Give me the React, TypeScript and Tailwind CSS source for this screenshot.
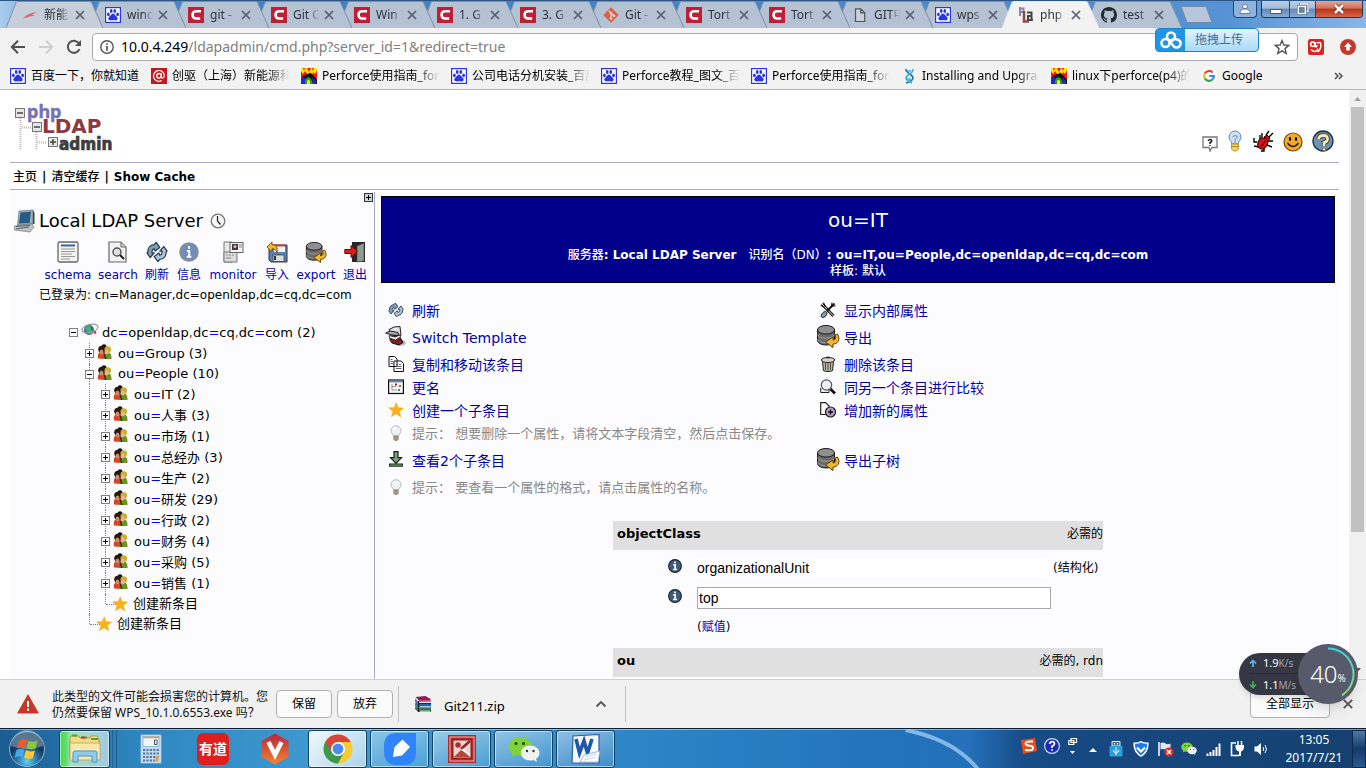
import React from "react";

const UI_FONT = "font-['Noto_Sans','Noto_Sans_CJK_SC',sans-serif]";
const PAGE_FONT = "font-['DejaVu_Sans','Noto_Sans_CJK_SC',sans-serif]";

type IconProps = { className?: string };

/* ---------- favicons ---------- */

const Paw = ({ className = "size-4" }: IconProps) => (
  <svg viewBox="0 0 16 16" className={className}>
    <rect x=".6" y=".6" width="14.8" height="14.8" fill="#fff" stroke="#2b35e0" strokeWidth="1.2" />
    <g fill="#2b35e0">
      <ellipse cx="3.4" cy="7.4" rx="1.4" ry="1.8" />
      <ellipse cx="6.2" cy="4" rx="1.4" ry="1.9" />
      <ellipse cx="9.8" cy="4" rx="1.4" ry="1.9" />
      <ellipse cx="12.6" cy="7.4" rx="1.4" ry="1.8" />
      <path d="M8 6.600c1.600 0 2 1.500 3.200 2.600 1.300 1.200 2 2.100 1.200 3.400-.8 1.200-2.600.7-4.400.7s-3.600.5-4.400-.7c-.8-1.300-.1-2.200 1.200-3.400C6 8.100 6.400 6.600 8 6.600z" />
    </g>
  </svg>
);

const CIcon = ({ className = "size-4" }: IconProps) => (
  <svg viewBox="0 0 16 16" className={className}>
    <rect width="16" height="16" fill="#bd1f36" />
    <path d="M13 4.300H8.500C5.800 4.300 4.600 6 4.600 8c0 2.300 1.300 3.500 3.600 3.500h4" fill="none" stroke="#fff" strokeWidth="2.600" />
  </svg>
);

const Hawk = ({ className = "size-4" }: IconProps) => (
  <svg viewBox="0 0 16 16" className={className}>
    <path d="M1 12c2-3 5-5.500 14-7-2 1-4 2-5 3l3-.3c-2 1-3 1.500-6 1.700L5 11l-.5-1z" fill="#e2606b" />
  </svg>
);

const GitIcon = ({ className = "size-4" }: IconProps) => (
  <svg viewBox="0 0 16 16" className={className}>
    <path d="M8 .3 15.700 8 8 15.700.3 8z" fill="#e0603f" />
    <path d="m5.500 3.500 2.500 2.500v6M8 6l3 3" stroke="#d5dae4" strokeWidth="1.200" fill="none" />
    <g fill="#d5dae4"><circle cx="8" cy="6" r="1.300" /><circle cx="8" cy="11.500" r="1.300" /><circle cx="11" cy="8.800" r="1.300" /></g>
  </svg>
);

const FileIcon = ({ className = "size-4" }: IconProps) => (
  <svg viewBox="0 0 16 16" className={className}>
    <path d="M3.500 1.800h5.200l4 4v8.700H3.500zM8.700 1.800v4h4" fill="#c7d0dc" stroke="#555" strokeWidth="1.200" />
  </svg>
);

const PlaIcon = ({ className = "size-4" }: IconProps) => (
  <svg viewBox="0 0 16 16" className={className}>
    <path d="M2 0v9M2 1.500h3.500v3.500H2" fill="none" stroke="#8a86a8" strokeWidth="2" />
    <path d="M6 4v10.500h5" fill="none" stroke="#8b4a50" strokeWidth="2.500" />
    <path d="M9 5.500h4.500V13H10V9h3.500m0 3.800H15" fill="none" stroke="#444" strokeWidth="2" />
  </svg>
);

const Github = ({ className = "size-4" }: IconProps) => (
  <svg viewBox="0 0 16 16" className={className}>
    <path fill="#24292e" d="M8 0C3.580 0 0 3.580 0 8c0 3.540 2.290 6.530 5.470 7.590.4.070.55-.17.55-.38 0-.19-.01-.82-.01-1.490-2.010.37-2.530-.49-2.690-.94-.09-.23-.48-.94-.82-1.130-.28-.15-.68-.52-.01-.53.63-.01 1.080.58 1.230.82.72 1.210 1.870.87 2.330.66.070-.52.28-.87.51-1.070-1.780-.2-3.640-.89-3.640-3.950 0-.87.31-1.590.82-2.150-.08-.2-.36-1.020.08-2.120 0 0 .67-.21 2.200.82a7.640 7.640 0 0 1 4 0c1.530-1.040 2.200-.82 2.200-.82.44 1.100.16 1.920.08 2.120.51.56.82 1.270.82 2.150 0 3.070-1.870 3.750-3.650 3.950.29.25.54.73.54 1.480 0 1.070-.01 1.930-.01 2.200 0 .21.15.46.55.38A8.010 8.010 0 0 0 16 8c0-4.420-3.580-8-8-8z" />
  </svg>
);

const AtIcon = ({ className = "size-4" }: IconProps) => (
  <svg viewBox="0 0 16 16" className={className}>
    <rect width="16" height="16" fill="#c8181e" />
    <circle cx="8" cy="7.800" r="2.300" fill="none" stroke="#fff" strokeWidth="1.300" />
    <path d="M10.400 5.300v3.700c0 1.600 2.900 1.500 2.900-1.400A5.400 5.400 0 1 0 10.800 12.500" fill="none" stroke="#fff" strokeWidth="1.200" />
  </svg>
);

const HouseIcon = ({ className = "size-4" }: IconProps) => (
  <svg viewBox="0 0 16 16" className={className}>
    <rect width="16" height="16" fill="#f01818" />
    <path d="M0 0h2l1 3 1-3h2l2 4 2-4h1l1 3 1-3h3v2l-2 4-2-2-1 3-2-3-2 3-3-4-2 3-2-3z" fill="#ffe900" />
    <path d="M1 9 6 6l4-1 6 7v4h-5z" fill="#111" />
    <path d="M0 9.500h4V16H0z" fill="#1b2ad0" />
    <path d="M4 15c-.5-5 4.500-9 7-2l1 3H9z" fill="#2a9d2a" />
    <path d="m11 9 4 4v3h-3z" fill="#1b2ad0" />
    <path d="M6 16v-3q1.500-2 3 0v3z" fill="#ffe900" />
  </svg>
);

const HelixIcon = ({ className = "size-4" }: IconProps) => (
  <svg viewBox="0 0 16 16" className={className} fill="none" strokeWidth="1.600">
    <path d="M5 1c-1 4 7 5 7 9 0 3-4 4-7 5" stroke="#1f6e9e" />
    <path d="M12 1c1 5-7 5-7 9 0 3 3 3 6 5" stroke="#35b0d6" />
    <path d="M6 3h4M6 11h4" stroke="#35b0d6" />
  </svg>
);

const GoogleIcon = ({ className = "size-4" }: IconProps) => (
  <svg viewBox="0 0 16 16" className={className}>
    <circle cx="8" cy="8" r="8" fill="#fff" />
    <g fill="none" strokeWidth="2.200">
      <path d="M11.700 4.500A5 5 0 0 0 3.700 5.600" stroke="#ea4335" />
      <path d="M3.700 5.600a5 5 0 0 0 0 4.800" stroke="#fbbc05" />
      <path d="M3.700 10.400a5 5 0 0 0 7.600 1.300" stroke="#34a853" />
      <path d="M11.300 11.700A5 5 0 0 0 13 8H8.200" stroke="#4285f4" />
    </g>
  </svg>
);

/* ---------- page icons ---------- */

const Refresh = ({ className = "size-4" }: IconProps) => (
  <svg viewBox="0 0 24 24" className={className} strokeLinejoin="round">
    <path d="M2 12c0-5 3-8 7-8l2-2.500L15 7l-5 4-1-2.500C7 8.500 6.500 10 6.500 13L9 13l-4.500 5L1 13z" fill="#7f9dbd" stroke="#27384a" strokeWidth="1.300" />
    <path d="M22 12c0 5-3 8-7 8l-2 2.500L9 17l5-4 1 2.500c2 0 2.500-1.500 2.500-4.500H15l4.500-5L23 11z" fill="#a9c1d9" stroke="#27384a" strokeWidth="1.300" />
  </svg>
);

const Database = ({ className = "size-6" }: IconProps) => (
  <svg viewBox="0 0 24 24" className={className}>
    <path d="M1.500 5.500v11c0 2.500 4 4.500 8.500 4.500s8.500-2 8.500-4.500v-11z" fill="#6b6b6b" stroke="#1a1a1a" />
    <ellipse cx="10" cy="5.800" rx="8.500" ry="4.300" fill="#8f8f8f" stroke="#1a1a1a" />
    <path d="M1.500 10.500c1 5 16 5 17 0M1.500 15c1 5 16 5 17 0" fill="none" stroke="#aaa" strokeWidth=".8" />
    <path d="M21.500 10c3.500 6 0 10-4.500 10v3.500L9.500 18l7.500-5v3c2.500 0 3.500-2 2-5z" fill="#f2b630" stroke="#5d3c00" />
  </svg>
);

const InfoIcon = ({ className = "size-4" }: IconProps) => (
  <svg viewBox="0 0 16 16" className={className}>
    <circle cx="8" cy="8" r="7.300" fill="#425b7b" stroke="#15202e" strokeWidth="1.200" />
    <path d="M8 2.800v2M6 6.800h2.200v5M5.800 12h4.600" stroke="#fff" strokeWidth="1.900" fill="none" />
  </svg>
);

const InfoSoft = ({ className = "size-5" }: IconProps) => (
  <svg viewBox="0 0 20 20" className={className}>
    <circle cx="10" cy="10" r="9" fill="#6f8fb8" stroke="#8d8d8d" strokeWidth="1.500" />
    <path d="M10 4.300v2.400M8 9h2.200v5.300M7.800 14.700h4.600" stroke="#fff" strokeWidth="2" fill="none" />
  </svg>
);

const People = ({ className = "size-4" }: IconProps) => (
  <svg viewBox="0 0 16 16" className={className}>
    <path d="M1 14.500c-1-4 1-6.500 3-6.500h4v7z" fill="#dc431f" />
    <path d="M7 15c0-5 1.500-6.500 4-6.500 3 0 3.500 3 3.500 6.500z" fill="#6d931e" />
    <circle cx="7" cy="2.800" r="2.500" fill="#16130f" />
    <circle cx="4.800" cy="5.300" r="3.600" fill="#2d1810" />
    <ellipse cx="4.500" cy="8" rx="2" ry="2.600" fill="#c98f6c" />
    <circle cx="10.800" cy="5.500" r="3.300" fill="#c9b02c" />
    <ellipse cx="9.800" cy="7.800" rx="1.900" ry="2.600" fill="#e0ba8e" />
    <path d="M6.500 9.500 8 15h1.500L8 10z" fill="#2b2b14" />
  </svg>
);

const Star = ({ className = "size-4" }: IconProps) => (
  <svg viewBox="0 0 16 16" className={className}>
    <path d="m8.200.8 1.900 4.900 5.400.4-4.200 3.300 1.500 5.400-4.700-3-4.700 2.800 1.700-5L.8 5.800l5.400-.1z" fill="#ffb215" stroke="#e89b10" strokeWidth=".5" />
  </svg>
);

const Bulb = ({ className = "size-4" }: IconProps) => (
  <svg viewBox="0 0 16 16" className={className}>
    <path d="M8 .7a5 5 0 0 1 5 5c0 2-1.700 3-2.200 5H5.200C4.700 8.700 3 7.700 3 5.700a5 5 0 0 1 5-5z" fill="#eef1f3" stroke="#b1b6ba" strokeWidth=".9" />
    <path d="M5.700 11h4.600v3.200l-1 1.300H6.700l-1-1.300z" fill="#a8987c" stroke="#858077" strokeWidth=".6" />
    <path d="M6 3.500h2.500" stroke="#fff" strokeWidth="1.500" />
  </svg>
);

const Copy = () => (
  <svg viewBox="0 0 16 16" className="size-4" fill="#fff" stroke="#111">
    <path d="M1 .5h5.500L9 3v7.500H1zM6 5h7l2.500 2.500v8H6z" />
    <path d="M2.500 3.500h2M2.500 5.500h3M2.500 7.500h3M8 8.500h2m1 0h2M8 10.500h5.500M8 12.500h5.500" stroke="#555" strokeWidth=".9" />
  </svg>
);
const Rename = () => (
  <svg viewBox="0 0 16 16" className="size-4">
    <rect x=".6" y="1" width="14.800" height="13.500" fill="#f4f4f4" stroke="#111" strokeWidth="1.200" />
    <path d="M1 2.600h14" stroke="#5b86ad" strokeWidth="1.500" />
    <path d="M4 5v6h5M4 7.500h4" stroke="#999" fill="none" />
    <path d="M7 4.500h2v2H7z" fill="#b32020" /><path d="M10 10h2v2h-2z" fill="#3a9a3a" /><path d="M11 6h2v2h-2z" fill="#777" />
  </svg>
);
const Template = () => (
  <svg viewBox="0 0 22 20" className="h-5 w-[22px]">
    <path d="m9 15 6-2 5 2 1 3-4 2-6-1z" fill="#777" opacity=".5" />
    <path d="m4 3.500 5-2.500 6-.5 1 9-7-1-4-2z" fill="#d9d9d9" stroke="#222" />
    <path d="M.7 7 5 5l8 1.500 1 3-7-.5z" fill="#aaa" stroke="#222" />
    <path d="m5 10 9-.5 4 7-4 2.500-7-2-2-3z" fill="#7d1f2b" stroke="#1a1012" />
    <path d="m4 9.500 6 1.500 5-2 .5 2-5 3-6-2z" fill="#f2f2f2" stroke="#222" strokeWidth=".8" />
    <path d="m9 2.500 4 1" stroke="#fff" strokeWidth="1.500" />
  </svg>
);
const DownArrow = () => (
  <svg viewBox="0 0 16 16" className="size-4">
    <path d="M6 .7h4v6h3.500L8 12.300 2.500 6.700H6z" fill="#7ba27c" stroke="#142414" strokeWidth="1.200" />
    <rect x="1.600" y="13" width="12.800" height="2.200" fill="#7ba27c" stroke="#142414" strokeWidth="1" />
  </svg>
);
const Tools = () => (
  <svg viewBox="0 0 16 16" className="size-4">
    <path d="m2 2 11.500 12" stroke="#111" strokeWidth="3" /><path d="m2 2 11.500 12" stroke="#eee" strokeWidth="1" />
    <path d="M14.500 1.500 7 9" stroke="#111" strokeWidth="2" />
    <path d="M1 14.500c0-2 2-5 4.500-5l1.500 1c0 3-2 5-5 5z" fill="#7d9fc4" stroke="#222" />
    <path d="M3.500.5 5 3.500 3.500 5 .7 3.500M12 .5l-.5 3.500 4 0" fill="none" stroke="#111" />
  </svg>
);
const Trash = () => (
  <svg viewBox="0 0 16 16" className="size-4">
    <path d="M2.500 5h11l-.9 9.500C11 16 5 16 3.400 14.500z" fill="#b9b6a7" stroke="#222" />
    <path d="M5.500 7v7M8 7v7.500M10.500 7v7" stroke="#4f4d44" />
    <ellipse cx="8" cy="4" rx="6.700" ry="2.500" fill="#d8d6cb" stroke="#222" /><path d="M6 1.500h4" stroke="#222" strokeWidth="1.500" />
  </svg>
);
const Compare = () => (
  <svg viewBox="0 0 16 16" className="size-4">
    <path d="M.7 9v4.500H9V9" fill="#eee" stroke="#222" />
    <circle cx="6.500" cy="6" r="5.200" fill="#eef1f3" stroke="#555" strokeWidth="1.200" />
    <path d="m10.500 10 4.500 4.500" stroke="#111" strokeWidth="2.600" />
  </svg>
);
const AddAttr = () => (
  <svg viewBox="0 0 16 16" className="size-4">
    <path d="M.7.7h5L9 4v8.500H.7z" fill="#fff" stroke="#222" strokeWidth="1.200" />
    <circle cx="10.500" cy="10" r="5" fill="#b3a3cc" stroke="#1d1828" strokeWidth="1.200" />
    <path d="M10.500 7.500v5M8 10h5" stroke="#111" strokeWidth="1.400" />
  </svg>
);

const SchemaIcon = () => (
  <svg viewBox="0 0 22 22" className="size-[22px]">
    <rect x="1" y="1" width="20" height="20" rx="1.500" fill="#f3f3f0" stroke="#696969" strokeWidth="1.300" />
    <path d="M4 4.500h14" stroke="#3f659a" strokeWidth="2" />
    <path d="M4 8h14M4 10.500h14M4 13h11M4 15.500h14M4 18h9" stroke="#999" strokeWidth="1.200" />
  </svg>
);
const SearchIcon = () => (
  <svg viewBox="0 0 22 22" className="size-[22px]">
    <path d="M2 1h12l5 5v15H2z" fill="#f3f3f0" stroke="#666" strokeWidth="1.200" /><path d="M14 1v5h5" fill="#ccc" stroke="#666" />
    <circle cx="10" cy="11" r="4" fill="#dde3e5" stroke="#555" strokeWidth="1.500" /><path d="m13 14 4 4" stroke="#222" strokeWidth="2.200" />
  </svg>
);
const MonitorIcon = () => (
  <svg viewBox="0 0 22 22" className="size-[22px]">
    <path d="M2 1h8v20H2z" fill="#e8e8e4" stroke="#777" /><path d="M2 11h13v10H2z" fill="#dcdcd8" stroke="#777" />
    <rect x="8" y="1.500" width="13" height="10" fill="#f2f2ee" stroke="#666" /><rect x="10" y="3" width="6" height="6" fill="#3b3b4a" /><circle cx="13" cy="5.500" r="1.500" fill="#e6bd92" />
    <path d="M4 14h2m1 0h2m1 0h2M4 17h5M17 4h3M17 6h3" stroke="#888" />
  </svg>
);
const ImportIcon = () => (
  <svg viewBox="0 0 22 22" className="size-[22px]">
    <path d="M3 4h18v17H5l-2-2z" fill="#5b83b5" stroke="#24364d" /><rect x="8" y="4" width="11" height="7" fill="#f6f6f6" /><path d="M8 4.500h11" stroke="#cf3b33" strokeWidth="2" />
    <rect x="7" y="14" width="11" height="6.500" fill="#ddd" stroke="#333" strokeWidth=".7" /><path d="M9 15v4" stroke="#333" strokeWidth="2" />
    <path d="M1 6 6 .8v3c4 0 6 2 5 8-1-3-2-4-5-4V11z" fill="#f4b62a" stroke="#6a4300" strokeWidth=".8" />
  </svg>
);
const LogoutIcon = () => (
  <svg viewBox="0 0 22 22" className="size-[22px]">
    <path d="M8 1h13v20H8z" fill="#262626" /><path d="m20 2-7 3v16l7-1z" fill="#8e9c8f" stroke="#444" strokeWidth=".6" />
    <path d="M.8 8.500H7v-4l6.500 6-6.500 6v-4H.8z" fill="#d62020" stroke="#650808" />
  </svg>
);
const ComputerIcon = () => (
  <svg viewBox="0 0 22 24" className="h-6 w-[22px]">
    <path d="m5 2 14-1v14L3.500 16z" fill="#9aaeb5" stroke="#667" strokeWidth=".6" /><path d="m6.500 3.500 10.500-.7L15.500 14 5 14.500z" fill="#235a87" />
    <path d="M19 1l1.500 3v11L19 15z" fill="#3a4548" /><path d="m0 17 18-2 2 3-4 5-16-2z" fill="#bcc7c4" stroke="#5d6a69" strokeWidth=".6" /><path d="m2 20 13-2M2 17.500l14-1" stroke="#55605e" />
  </svg>
);
const ClockIcon = () => (
  <svg viewBox="0 0 16 16" className="size-4">
    <circle cx="8" cy="8" r="6.800" fill="#f7f7f4" stroke="#777" strokeWidth="1.300" /><path d="M7.500 3v5l3 3.500" fill="none" stroke="#222" strokeWidth="1.200" />
  </svg>
);
const GlobeIcon = () => (
  <svg viewBox="0 0 18 16" className="h-4 w-[18px]">
    <circle cx="8" cy="7" r="5" fill="#2b62a8" /><path d="M4 5c2-3 6-3 6 0s3 2 2 5-4 1-5 0-3-2-3-5z" fill="#3bb36c" />
    <ellipse cx="9" cy="5.500" rx="8.200" ry="4" fill="none" stroke="#9a9a9a" strokeWidth="1.200" transform="rotate(-14 9 5.500)" /><circle cx="14" cy="9.500" r="1.300" fill="#c22" />
  </svg>
);

const PlaLogo = () => (
  <svg viewBox="0 0 104 50" className="h-[50px] w-[104px]" role="img" aria-label="phpLDAPadmin">
    <g fill="none" stroke="#bbb" strokeDasharray="1 1"><path d="M5.500 16v32M7 25.500h10M21.500 30v18M22 40.500h10" strokeWidth="2" /></g>
    <g fill="#e6e6e6" stroke="#777"><rect x=".5" y="6.500" width="9" height="9" /><rect x="17.500" y="20.500" width="9" height="9" /><rect x="33.500" y="35.500" width="9" height="9" /></g>
    <path d="M2 11h6M19 25h6M35 40h6M38 37v6" stroke="#444" strokeWidth="1.500" />
    <g fontWeight="bold">
      <text x="12" y="16" fontSize="18" fill="#7673b3" stroke="#7673b3" strokeWidth=".4" fontFamily="'Noto Sans'">php</text>
      <text x="27" y="31" fontSize="20" fill="#8b3a41" fontFamily="'DejaVu Sans'">LDAP</text>
      <text x="44" y="48" fontSize="17" fill="#3d3d3d" stroke="#3d3d3d" strokeWidth=".7" fontFamily="'DejaVu Sans Condensed'">admin</text>
    </g>
  </svg>
);

/* ---------- browser chrome ---------- */

type Icon = (p: IconProps) => React.JSX.Element;

const tabs: { icon: Icon; title: string; active?: boolean }[] = [
  { icon: Hawk, title: "新能" },
  { icon: Paw, title: "wind" },
  { icon: CIcon, title: "git -" },
  { icon: CIcon, title: "Git C" },
  { icon: CIcon, title: "Win" },
  { icon: CIcon, title: "1. G" },
  { icon: CIcon, title: "3. G" },
  { icon: GitIcon, title: "Git -" },
  { icon: CIcon, title: "Tort" },
  { icon: CIcon, title: "Tort" },
  { icon: FileIcon, title: "GIT中" },
  { icon: Paw, title: "wps" },
  { icon: PlaIcon, title: "php", active: true },
  { icon: Github, title: "test" },
];

function TabStrip() {
  return (
    <div className="flex h-7 items-start justify-between border-t border-[#2b5685] bg-[linear-gradient(90deg,#a9cdec_0%,#4288cf_6%,#3d7fc9_30%,#3f86d2_60%,#5793d4_90%,#8ab6e6_100%)]">
      <div className="flex pl-[6px]" role="tablist">
        {tabs.map((t, i) => (
          <div
            key={i}
            className="relative -mr-[14px] flex h-[27px] w-[97px] shrink-0 items-center pr-[18px] pl-4"
            style={{ zIndex: t.active ? 20 : 19 - i }}
          >
            <svg viewBox="0 0 97 27" className="absolute inset-0 h-full w-full" preserveAspectRatio="none">
              <path d="M0 27 10 1.500Q10.500.5 12 .5H83.500Q85 .5 85.500 1.500L97 27" fill={t.active ? "#f2f2f2" : i === 0 ? "#c6ced9" : "#b4c2d3"} stroke={t.active ? "#e4e8ec" : "#7f90a5"} strokeWidth="1" />
            </svg>
            <button role="tab" aria-selected={!!t.active} className="relative flex min-w-0 flex-1 items-center gap-1.5 text-left text-xs leading-5 text-[#2c333c]">
              <t.icon className="size-4 shrink-0" />
              <span className="w-[26px] overflow-hidden whitespace-nowrap [mask-image:linear-gradient(90deg,#000_60%,transparent)]">{t.title}</span>
            </button>
            <button aria-label="关闭标签页" className="relative">
              <svg viewBox="0 0 10 10" className="size-[10px]"><path d="m1 1 8 8M9 1 1 9" stroke="#56606c" strokeWidth="1.700" /></svg>
            </button>
          </div>
        ))}
        <button aria-label="新标签页" className="ml-[11px] h-[17px] self-center">
          <svg viewBox="0 0 34 17" className="h-[17px] w-[34px]"><path d="M3 .5h23q1 0 1.500 1l5 14q.3 1-1 1H9q-1 0-1.500-1l-5-14q-.3-1 .5-1z" fill="#b7c6da" stroke="#7289a6" /></svg>
        </button>
      </div>
      <div className="flex items-start gap-1 pr-[3px]">
        <button aria-label="用户" className="flex h-[17px] w-6 items-center justify-center rounded-b border border-t-0 border-[#26466e] bg-[#8fb3dc]">
          <svg viewBox="0 0 12 12" className="size-3"><circle cx="6" cy="3.500" r="2.300" fill="#fff" stroke="#3c5878" strokeWidth=".7" /><path d="M1 10.500c0-3 1.500-4.500 5-4.500s5 1.500 5 4.500z" fill="#fff" stroke="#3c5878" strokeWidth=".7" /></svg>
        </button>
        <div className="flex h-[17px] overflow-hidden rounded-b border border-t-0 border-[#26344c]">
          <button aria-label="最小化" className="flex w-7 items-center justify-center border-r border-[#2e4869] bg-[linear-gradient(#b9cfe8_0%,#a3bddb_45%,#6287b5_50%,#88acd8_100%)]">
            <svg viewBox="0 0 12 5" className="mt-1 h-[5px] w-3"><rect x=".5" y=".5" width="11" height="4" fill="#fff" stroke="#4b5c73" /></svg>
          </button>
          <button aria-label="还原" className="flex w-[26px] items-center justify-center border-r border-[#2e4869] bg-[linear-gradient(#b9cfe8_0%,#a3bddb_45%,#6287b5_50%,#88acd8_100%)]">
            <svg viewBox="0 0 12 12" className="size-3"><path d="M3.500 1h7.500v7.500H3.500z" fill="none" stroke="#445468" strokeWidth="2.200" /><path d="M3.500 1h7.500v7.500H3.500z" fill="none" stroke="#fff" strokeWidth="1.300" /><rect x="1.300" y="3.500" width="7" height="7" fill="#6287b5" stroke="#445468" strokeWidth="2.400" /><rect x="1.300" y="3.500" width="7" height="7" fill="none" stroke="#fff" strokeWidth="1.500" /></svg>
          </button>
          <button aria-label="关闭" className="flex w-[46px] items-center justify-center bg-[linear-gradient(#e3a595_0%,#d0705c_45%,#b93217_50%,#d5654a_100%)]">
            <svg viewBox="0 0 12 12" className="size-3"><path d="m2 2 8 8m0-8-8 8" stroke="#5b2a22" strokeWidth="4" /><path d="m2 2 8 8m0-8-8 8" stroke="#fff" strokeWidth="2.500" /></svg>
          </button>
        </div>
      </div>
    </div>
  );
}

function Toolbar() {
  return (
    <div className="flex h-[38px] items-center bg-[#f2f2f2] pr-2 pl-[10px]">
      <button aria-label="后退"><svg viewBox="0 0 16 16" className="size-4"><path d="M15 8H2m6-6.300L1.800 8 8 14.300" fill="none" stroke="#505050" strokeWidth="2" /></svg></button>
      <button aria-label="前进" className="ml-3"><svg viewBox="0 0 16 16" className="size-4"><path d="M1 8h13M8 1.700 14.200 8 8 14.300" fill="none" stroke="#cfcfcf" strokeWidth="2" /></svg></button>
      <button aria-label="重新加载" className="ml-3"><svg viewBox="0 0 16 16" className="size-4"><path d="M13.500 10A6 6 0 1 1 12.500 4" fill="none" stroke="#505050" strokeWidth="2" /><path d="M15 1v6H9z" fill="#505050" /></svg></button>
      <div className="ml-[10px] flex h-7 flex-1 items-center rounded-sm border border-[#a9a9a9] bg-white px-[7px]">
        <svg viewBox="0 0 14 14" className="size-[14px]"><circle cx="7" cy="7" r="6.200" fill="none" stroke="#555" strokeWidth="1.400" /><path d="M7 3.200v1.600M7 6v4.800" stroke="#555" strokeWidth="1.700" /></svg>
        <a href="#address" aria-label="地址" className="ml-[7px] flex-1 text-sm leading-5 text-[#808080]"><span className="text-black">10.0.4.249</span>/ldapadmin/cmd.php?server_id=1&amp;redirect=true</a>
        <button aria-label="收藏"><svg viewBox="0 0 16 16" className="size-4"><path d="m8 1.500 1.900 4.500 4.800.4-3.700 3.200 1.200 4.800L8 11.800l-4.200 2.600L5 9.600 1.300 6.400 6.100 6z" fill="none" stroke="#555" strokeWidth="1.400" /></svg></button>
      </div>
      <button aria-label="扩展" className="ml-[10px]">
        <svg viewBox="0 0 16 16" className="size-4"><rect width="16" height="16" rx="2.500" fill="#e02020" /><circle cx="4.800" cy="5.300" r="2.200" fill="none" stroke="#fff" strokeWidth="1.600" /><path d="M7 3v4.500q2 1 2-1.500M3 10.500c3 3 6 2.500 7-1M8.500 4q3-1 4 0 1.500 6-3 9" fill="none" stroke="#fff" strokeWidth="1.500" /></svg>
      </button>
      <button aria-label="更新" className="ml-4 mr-[2px]">
        <svg viewBox="0 0 16 16" className="size-4"><circle cx="8" cy="8" r="8" fill="#c53727" /><path d="M8 3.500 12 8h-2.300v3.500H6.300V8H4z" fill="#fff" /></svg>
      </button>
    </div>
  );
}

const bookmarks: { icon: Icon; title: string }[] = [
  { icon: Paw, title: "百度一下，你就知道" },
  { icon: AtIcon, title: "创驱（上海）新能源科" },
  { icon: HouseIcon, title: "Perforce使用指南_for" },
  { icon: Paw, title: "公司电话分机安装_百度" },
  { icon: Paw, title: "Perforce教程_图文_百" },
  { icon: Paw, title: "Perforce使用指南_for" },
  { icon: HelixIcon, title: "Installing and Upgra" },
  { icon: HouseIcon, title: "linux下perforce(p4)的" },
  { icon: GoogleIcon, title: "Google" },
];

function Bookmarks() {
  return (
    <div className="flex h-6 items-center border-b border-[#b6b4b6] bg-[#f2f2f2] pb-[3px] pl-[10px]">
      {bookmarks.map((b, i) => (
        <a key={i} href="#bookmark" className={`flex shrink-0 items-center gap-[5px] text-xs leading-4 text-black ${i === 0 ? "w-[141px]" : i < 8 ? "w-[150px]" : ""}`}>
          <b.icon className="size-4 shrink-0" />
          <span className={`overflow-hidden whitespace-nowrap ${i > 0 && i < 8 ? "w-[118px] [mask-image:linear-gradient(90deg,#000_80%,transparent)]" : ""}`}>{b.title}</span>
        </a>
      ))}
      <button aria-label="更多书签" className="mr-[22px] ml-auto"><svg viewBox="0 0 10 8" className="h-2 w-[10px]"><path d="m1 1 3 3-3 3m4-6 3 3-3 3" fill="none" stroke="#505050" strokeWidth="1.500" /></svg></button>
    </div>
  );
}

/* ---------- page: sidebar ---------- */

const serverTools: { label: string; width: string; icon: React.JSX.Element }[] = [
  { label: "schema", width: "w-[46px]", icon: <SchemaIcon /> },
  { label: "search", width: "w-[38px]", icon: <SearchIcon /> },
  { label: "刷新", width: "w-6", icon: <Refresh className="size-[22px]" /> },
  { label: "信息", width: "w-6", icon: <InfoSoft className="size-5" /> },
  { label: "monitor", width: "w-12", icon: <MonitorIcon /> },
  { label: "导入", width: "w-6", icon: <ImportIcon /> },
  { label: "export", width: "w-[38px]", icon: <Database className="size-[22px]" /> },
  { label: "退出", width: "w-6", icon: <LogoutIcon /> },
];

const Toggle = ({ open }: { open?: boolean }) => (
  <button aria-label={open ? "折叠" : "展开"} className="relative">
    <svg viewBox="0 0 9 9" className="size-[9px]"><rect x=".5" y=".5" width="8" height="8" fill="#fff" stroke="#808080" /><path d={open ? "M2 4.500h5" : "M2 4.500h5M4.500 2v5"} stroke="#000" /></svg>
  </button>
);

const Dn = ({ text }: { text: string }) => (
  <>
    {text.split(/([=,])/).map((p, i) =>
      p === "=" ? <span key={i} className="text-[#0000ff]">=</span> : p === "," ? <span key={i} className="text-[#ff0000]">,</span> : p,
    )}
  </>
);

const Line = ({ half }: { half?: boolean }) => (
  <span className={`flex w-4 shrink-0 self-stretch ${half ? "items-start" : ""}`}>
    <span className={`ml-[5px] w-px border-l border-dotted border-[#808080] ${half ? "h-1/2" : "h-full"}`} />
    {half && <span className="flex h-full flex-1 items-center"><span className="w-full border-t border-dotted border-[#808080]" /></span>}
  </span>
);

function Node({ depth, open, text, count }: { depth: number; open?: boolean; text: string; count: number }) {
  return (
    <div className={`flex items-center ${depth === 1 && open ? "h-5" : "h-[21px]"}`}>
      {depth > 1 && <Line />}
      <span className="relative flex w-[13px] shrink-0 items-center self-stretch pl-px">
        {depth > 0 && <span className="absolute top-0 left-[5px] h-full border-l border-dotted border-[#808080]" />}
        <Toggle open={open} />
      </span>
      <span className="shrink-0 pb-[3px]">{depth === 0 ? <GlobeIcon /> : <People />}</span>
      <a href="#entry" className={`whitespace-nowrap text-[13px] leading-5 text-black ${depth === 0 ? "pl-[3px]" : "pl-[5px]"}`}>
        <Dn text={text} /> ({count})
      </a>
    </div>
  );
}

const units: [string, number][] = [["IT", 2], ["人事", 3], ["市场", 1], ["总经办", 3], ["生产", 2], ["研发", 29], ["行政", 2], ["财务", 4], ["采购", 5], ["销售", 1]];

function Sidebar() {
  return (
    <aside className="relative w-[365px] shrink-0 border-r border-[#aaaacc] bg-[#fcfcfe]">
      <button aria-label="展开侧栏" className="absolute top-px right-px">
        <svg viewBox="0 0 9 9" className="size-[9px]"><rect x=".5" y=".5" width="8" height="8" fill="#c8d8dc" stroke="#333" /><path d="M2 4.500h5M4.500 2v5" stroke="#000" /></svg>
      </button>
      <div className="flex items-center pt-[17px] pl-1">
        <ComputerIcon />
        <h2 className="ml-[3px] text-lg leading-6">Local LDAP Server</h2>
        <span className="ml-[7px]"><ClockIcon /></span>
      </div>
      <nav className="flex gap-2 pt-2 pl-[35px] text-[#00a]">
        {serverTools.map((t) => (
          <a key={t.label} href="#tool" className={`flex shrink-0 flex-col items-center gap-[2px] whitespace-nowrap ${t.width}`}>
            <span className="flex h-[22px] items-center">{t.icon}</span>
            <span className="text-xs leading-5">{t.label}</span>
          </a>
        ))}
      </nav>
      <p className="pl-[29px] text-xs leading-5">已登录为: cn=Manager,dc=openldap,dc=cq,dc=com</p>
      <div className="pt-[17px] pl-[58px]">
        <Node depth={0} open text="dc=openldap,dc=cq,dc=com" count={2} />
        <div className="pl-4">
          <Node depth={1} text="ou=Group" count={3} />
          <Node depth={1} open text="ou=People" count={10} />
          {units.map(([u, n]) => <Node key={u} depth={2} text={`ou=${u}`} count={n} />)}
          <div className="flex h-5 items-center text-[13px] leading-5">
            <Line />
            <Line half />
            <a href="#new" className="-ml-1 flex items-center gap-[5px] text-black"><Star />创建新条目</a>
          </div>
          <div className="flex h-5 items-center text-[13px] leading-5">
            <Line half />
            <a href="#new" className="-ml-1 flex items-center gap-[5px] text-black"><Star />创建新条目</a>
          </div>
        </div>
      </div>
    </aside>
  );
}

/* ---------- page: entry ---------- */

type Action = { icon: React.JSX.Element; label: string; hint?: boolean };
const actions: { tall?: boolean; left: Action; right?: Action }[] = [
  { left: { icon: <Refresh />, label: "刷新" }, right: { icon: <Tools />, label: "显示内部属性" } },
  { tall: true, left: { icon: <Template />, label: "Switch Template" }, right: { icon: <Database />, label: "导出" } },
  { left: { icon: <Copy />, label: "复制和移动该条目" }, right: { icon: <Trash />, label: "删除该条目" } },
  { left: { icon: <Rename />, label: "更名" }, right: { icon: <Compare />, label: "同另一个条目进行比较" } },
  { left: { icon: <Star />, label: "创建一个子条目" }, right: { icon: <AddAttr />, label: "增加新的属性" } },
  { left: { icon: <Bulb />, label: "提示： 想要删除一个属性，请将文本字段清空，然后点击保存。", hint: true } },
  { tall: true, left: { icon: <DownArrow />, label: "查看2个子条目" }, right: { icon: <Database />, label: "导出子树" } },
  { left: { icon: <Bulb />, label: "提示： 要查看一个属性的格式，请点击属性的名称。", hint: true } },
];

const ActionCell = ({ a }: { a: Action }) => (
  <div className="flex items-center gap-1">
    <span className="flex h-6 w-6 shrink-0 items-center justify-center pb-[3px]">{a.icon}</span>
    {a.hint ? <span className="whitespace-nowrap text-[13px] leading-5 text-[#888]">{a.label}</span> : <a href="#action" className="whitespace-nowrap text-sm leading-5 text-[#00a]">{a.label}</a>}
  </div>
);

function AttrHead({ name, note }: { name: string; note: string }) {
  return (
    <div className="flex h-[29px] justify-between bg-[#e0e0e0] pt-[3px] pl-1">
      <b className="text-[13px] leading-5">{name}</b>
      <span className="text-xs leading-5">{note}</span>
    </div>
  );
}

function Entry() {
  return (
    <main className="min-w-0 flex-1 bg-[#fcfcff] pt-1 pr-1 pl-[6px]">
      <header className="flex h-[87px] flex-col items-center border border-black bg-[#00008b] pt-2 text-white">
        <h1 className="text-xl leading-[30px]">ou=IT</h1>
        <p className="mt-3 flex gap-3 text-xs leading-4 font-bold"><span><span className="font-medium">服务器</span>: Local LDAP Server</span><span><span className="font-medium">识别名（DN）</span>: ou=IT,ou=People,dc=openldap,dc=cq,dc=com</span></p>
        <p className="text-xs leading-4 font-medium">样板: 默认</p>
      </header>
      <div className="pt-4 pl-[3px]">
        {actions.map((row, i) => (
          <div key={i} className={`grid grid-cols-[432px_1fr] items-center ${row.tall ? "h-[31px]" : "h-[23px]"}`}>
            <ActionCell a={row.left} />
            {row.right && <ActionCell a={row.right} />}
          </div>
        ))}
      </div>
      <form className="mx-auto mt-[22px] w-[490px]">
        <AttrHead name="objectClass" note="必需的" />
        <div className="flex items-center pt-2">
          <label htmlFor="oc1" className="ml-[55px] pb-1"><InfoIcon className="size-[14px]" /></label>
          <input id="oc1" aria-label="organizationalUnit" readOnly defaultValue="organizationalUnit" className="ml-[15px] h-5 w-[350px] bg-white font-['Liberation_Sans',sans-serif] text-sm leading-5 outline-none" />
          <span className="ml-[6px] whitespace-nowrap text-xs leading-5">(结构化)</span>
        </div>
        <div className="flex items-center pt-[9px]">
          <label htmlFor="oc2" className="ml-[55px] pb-1"><InfoIcon className="size-[14px]" /></label>
          <input id="oc2" aria-label="top" defaultValue="top" className="ml-[15px] h-[22px] w-[354px] border border-[#a9a9a9] bg-white px-px font-['Liberation_Sans',sans-serif] text-sm leading-5 outline-none" />
        </div>
        <p className="mt-2 mb-[11px] pl-[84px] text-xs leading-5">(<a href="#assign" className="text-[#00a]">赋值</a>)</p>
        <AttrHead name="ou" note="必需的, rdn" />
      </form>
    </main>
  );
}

const SpeechIcon = () => (
  <svg viewBox="0 0 16 16" className="size-4"><path d="M1 1h14v10.500h-5L8 15l-1-3.500H1z" fill="#fff" stroke="#777" strokeWidth="1.300" /><path d="M6 4.700Q8 2.500 9.700 4.300 10 6 8 6.500V8m0 1v1" fill="none" stroke="#222" strokeWidth="1.500" /></svg>
);
const LampIcon = () => (
  <svg viewBox="0 0 16 22" className="h-[22px] w-4"><path d="M8 1a6 6 0 0 1 6 6c0 3-2.500 4-3 7H5C4.500 11 2 10 2 7a6 6 0 0 1 6-6z" fill="#cfe0f5" stroke="#5d86b8" /><path d="M5.500 7Q8 4 10.500 6.500L8 10v3" fill="none" stroke="#6d8fc0" /><path d="M4.500 14h7v5l-2 2h-3l-2-2z" fill="#f1d35b" stroke="#a98a1c" strokeWidth=".8" /><path d="M4.500 16.500h7" stroke="#a98a1c" /></svg>
);
const BugIcon = () => (
  <svg viewBox="0 0 22 22" className="size-[22px]"><g stroke="#000" strokeWidth="1.400" fill="none"><path d="M5 12H2V8M7 17l-5-1M9 21h3v-4M15 15l5 2M16 11h5M14 5l3-4M17 7l4-4M10 8V3M8 10V5" /></g><path d="M6 12c1-4 5-4 8-4l2 3c0 5-4 9-7 8s-4-3-3-7z" fill="#e00d0d" stroke="#000" /><path d="m12 7 3-2 3 3-2 3z" fill="#c00" stroke="#000" /><path d="m9 17 5-7" stroke="#000" /></svg>
);
const SmileIcon = () => (
  <svg viewBox="0 0 20 20" className="size-5"><circle cx="10" cy="10" r="9" fill="#f2a928" stroke="#7a4a00" strokeWidth="1.200" /><ellipse cx="7" cy="7" rx="1.100" ry="2" /><ellipse cx="13" cy="7" rx="1.100" ry="2" /><path d="M4.500 11q5.500 7 11 0" fill="none" stroke="#222" strokeWidth="1.500" /></svg>
);
const HelpIcon = () => (
  <svg viewBox="0 0 22 22" className="size-[22px]"><circle cx="11" cy="11" r="10" fill="#6e92b2" stroke="#1c2c3a" strokeWidth="1.300" /><path d="M6.500 9Q7 5.500 11.500 5.500t4 4q-.5 2.500-3.500 3.200V16m0 2.500v2.500" fill="none" stroke="#3b3316" strokeWidth="4.500" /><path d="M6.500 9Q7 5.500 11.500 5.500t4 4q-.5 2.500-3.500 3.200V16m0 2.500v2" fill="none" stroke="#f7e9b8" strokeWidth="2.800" /></svg>
);

function Page() {
  return (
    <div className={`flex min-h-0 flex-1 bg-white text-black ${PAGE_FONT}`}>
      <div className="min-w-0 flex-1 overflow-hidden pr-[10px] pl-[10px]">
        <div className="flex h-[72px] items-end justify-between pr-[5px] pb-[10px] pl-[5px]">
          <PlaLogo />
          <div className="flex items-end gap-[9px]">
            {[SpeechIcon, LampIcon, BugIcon, SmileIcon, HelpIcon].map((I, i) => (
              <a key={i} href="#help" aria-label="链接"><I /></a>
            ))}
          </div>
        </div>
        <nav className="flex h-7 items-center gap-[5px] border-y border-[#aaaacc] pt-px pl-[3px] text-xs leading-5">
          <a href="#home" className="font-medium">主页</a><b>|</b><a href="#purge" className="font-medium">清空缓存</a><b>|</b><a href="#cache" className="font-bold">Show Cache</a>
        </nav>
        <div className="flex min-h-[600px] pt-[2px]">
          <Sidebar />
          <Entry />
        </div>
      </div>
      <div className="flex w-[17px] shrink-0 flex-col items-center bg-[#f1f1f1]">
        <svg viewBox="0 0 17 17" className="size-[17px] shrink-0"><path d="m5 11 3.500-4 3.500 4z" fill="#a0a0a0" /></svg>
        <div className="h-[425px] w-[13px] bg-[#c1c1c1]" />
        <svg viewBox="0 0 17 17" className="mt-auto size-[17px] shrink-0"><path d="m5 6 3.500 4L12 6z" fill="#505050" /></svg>
      </div>
    </div>
  );
}

/* ---------- downloads ---------- */

const shelfButton = "h-7 rounded-sm border border-[#b1b1b1] bg-[#fbfbfb] text-xs leading-4 text-black";

function Shelf() {
  return (
    <div className="flex h-[49px] shrink-0 items-center border-t border-[#cfcfcf] bg-[#f1f1f1] pl-[17px]">
      <svg viewBox="0 0 22 20" className="h-5 w-[22px]"><path d="M11 0 22 19.500H0z" fill="#c53727" /><path d="M11 7v6M11 14.500v2.300" stroke="#fff" strokeWidth="2" /></svg>
      <p className="ml-[13px] w-[218px] pt-px text-xs leading-4 text-[#111]"><span className="block whitespace-nowrap">此类型的文件可能会损害您的计算机。您</span><span className="block whitespace-nowrap">仍然要保留 WPS_10.1.0.6553.exe 吗？</span></p>
      <button className={`${shelfButton} ml-[6px] w-14`}>保留</button>
      <button className={`${shelfButton} ml-[5px] w-14`}>放弃</button>
      <div className="ml-[5px] flex h-9 w-[228px] items-center border-x border-[#c3c3c3] pr-[18px] pl-4">
        <svg viewBox="0 0 16 16" className="size-4"><path d="M0 2.500 3 5v3L0 5.500zM0 7l3 2.500v3L0 10zM0 11l3 3v2l-3-3z" fill="#777" /><path d="m.5 1 10-1 5 3v2L5 5.500z" fill="#8d1d55" /><path d="M4 4h11.500v2.500H4z" fill="#c44a8e" /><path d="m.5 5.500 3 2.500H16v3H4L.5 8z" fill="#2463ae" /><path d="m.5 10 3 2.500H16V16H4l-3.500-3z" fill="#0f8452" /><path d="M5 6.300h10.500M5 10.800h10.500M5 15.200h10" stroke="#e8f0e8" /><path d="M3.500 5v11M4 7.500h12M4 12h12" stroke="#111" strokeWidth=".9" /></svg>
        <span className="ml-[13px] pt-[3px] text-[13px] leading-5">Git211.zip</span>
        <button aria-label="菜单" className="ml-auto"><svg viewBox="0 0 12 8" className="h-2 w-3"><path d="m1.500 6.500 4.500-4.500 4.500 4.500" fill="none" stroke="#555" strokeWidth="1.800" /></svg></button>
      </div>
      <button className={`${shelfButton} ml-auto w-20`}>全部显示</button>
      <button aria-label="关闭" className="mr-[13px] ml-[13px]"><svg viewBox="0 0 10 10" className="size-[10px]"><path d="m.8.800 8.400 8.400m0-8.400-8.400 8.400" stroke="#555" strokeWidth="1.800" /></svg></button>
    </div>
  );
}

/* ---------- taskbar ---------- */

const WeChat = ({ className }: IconProps) => (
  <svg viewBox="0 0 32 26" className={className}>
    <path d="M12 1C5 1 .5 5.500.5 10.500c0 3 1.500 5.500 4 7L3.500 21l4-2q2 .7 4.500.7c6.500 0 11.500-4 11.500-9.200S18.500 1 12 1z" fill="#7fd23c" />
    <path d="M22 9.500c-5 0-9 3.200-9 7.500s4 7.500 9 7.500q2 0 3.500-.5l3.500 2-1-3c2-1.500 3.500-3.500 3.500-6 0-4.300-4.500-7.500-9.500-7.500z" fill="#f1f1f1" />
    <g fill="#23401b"><circle cx="8" cy="7.500" r="1.500" /><circle cx="15.500" cy="7.500" r="1.500" /><circle cx="19" cy="15" r="1.200" /><circle cx="25.500" cy="15" r="1.200" /></g>
  </svg>
);

const FolderIcon = () => (
  <svg viewBox="0 0 34 30" className="h-[30px] w-[34px]"><path d="M2 4 3 2h8l1 2h10l1-2h6l2 3v20H2z" fill="#f3dc85" stroke="#b48e2c" strokeWidth=".8" /><path d="M4 1.500h5M14 3.500h5M23 5h7" stroke="#46a53e" strokeWidth="2" /><path d="M13 3.500h4" stroke="#c43" strokeWidth="2" /><path d="M2 9h30v17H2z" fill="#f7e9ae" stroke="#c2a04a" strokeWidth=".8" /><path d="M5 28V19q0-2 2-2h20q2 0 2 2v9h-5v-6H10v6z" fill="#8fcbed" stroke="#4e94c0" /></svg>
);
const CalcIcon = () => (
  <svg viewBox="0 0 22 30" className="h-[30px] w-[22px]"><rect x=".5" y=".5" width="21" height="29" rx="1.500" fill="#bfdcf4" stroke="#6d9cc4" /><rect x="3" y="2.500" width="16" height="10" fill="#eef5fb" stroke="#89aecd" strokeWidth=".8" /><path d="M3 3.500h16" stroke="#e8a13a" strokeWidth="1.500" /><path d="M14.500 6h2.500v4.500h-2.500z" fill="none" stroke="#456" /><path d="M3 16h16M3 19.500h16M3 23h16M3 26.500h12" stroke="#55799c" strokeWidth="2" strokeDasharray="2.200 1.200" /><path d="M17 22v5.500" stroke="#e8a13a" strokeWidth="3" /></svg>
);
const VIcon = () => (
  <svg viewBox="0 0 28 32" className="h-8 w-7"><defs><linearGradient id="vg" x2="0" y2="1"><stop stopColor="#b8243e" /><stop offset="1" stopColor="#f5842c" /></linearGradient></defs><path d="m14 .5 13.500 7.500v16L14 31.500.5 24V8z" fill="url(#vg)" /><path d="m7.500 9 6.500 13 6.500-13" fill="none" stroke="#fff" strokeWidth="4.500" /></svg>
);
const ChromeIcon = () => (
  <svg viewBox="0 0 30 30" className="size-[30px]"><circle cx="15" cy="15" r="14.500" fill="#f8cc31" /><path d="M15 15 2.400 7.800A14.500 14.500 0 0 0 15 29.500l6-11z" fill="#3b9a4c" /><path d="M2.400 7.800A14.500 14.500 0 0 1 27.700 8H15L9 18.500z" fill="#d9453a" /><circle cx="15" cy="15" r="7" fill="#fff" /><circle cx="15" cy="15" r="5.400" fill="#4b8bf0" /></svg>
);
const PenIcon = () => (
  <svg viewBox="0 0 32 32" className="size-8"><path d="M13 0h19v20q0 12-12 12h-7Q0 32 0 19v-6Q0 0 13 0z" fill="#2f83fb" /><path d="m9 24 1.500-10 8-7.500 7.500 7.500-8 8.500z" fill="#fff" /></svg>
);
const PicIcon = () => (
  <svg viewBox="0 0 28 28" className="size-7"><rect width="28" height="28" fill="#b22b2b" /><rect x="2" y="2" width="24" height="24" fill="none" stroke="#f0b7ae" /><rect x="5" y="5" width="18" height="18" fill="#e9d6d2" stroke="#7d1919" /><circle cx="10" cy="10" r="2.800" fill="#b22b2b" /><path d="m13 14 9-8" stroke="#9a2222" strokeWidth="2.500" /><path d="m6 22 7-7 3 2 6 5z" fill="#b9443c" /><path d="m14 14 8 6" stroke="#fff" strokeWidth="1.500" /></svg>
);
const WordIcon = () => (
  <svg viewBox="0 0 30 30" className="size-[30px]"><path d="m2 2 26-1.500V29H1z" fill="#f5f8fc" stroke="#2a5fa8" strokeWidth="1.200" /><path d="m5 5 3.500 14L13 7l3.500 12L21 5" fill="none" stroke="#1e56a8" strokeWidth="3.600" /><path d="m9 28 4-7 16-4-2 11z" fill="#fff" stroke="#8ba7cc" strokeWidth=".8" /><path d="m14 23 12-3M13 26l12-3" stroke="#c3d2e5" /></svg>
);

const taskButton = "flex h-[38px] w-[59px] shrink-0 items-center justify-center rounded-[3px] border border-[#12405f] shadow-[inset_0_0_0_1px_rgba(255,255,255,0.55)]";

function Taskbar() {
  return (
    <div className="relative flex h-10 shrink-0 items-center overflow-hidden border-t border-[#0b1d33] bg-[linear-gradient(90deg,#1b5c92_0%,#2e86bf_10%,#3f9bd2_24%,#2e8acb_42%,#2273b9_65%,#2470ba_71%,#174b85_75%,#15406f_100%)] shadow-[inset_0_1px_0_rgba(255,255,255,0.45)]">
      <svg viewBox="0 0 120 40" className="absolute top-0 left-[66.200%] h-full w-[120px]"><path d="M0 1q50 10 74 40" stroke="#9cc9f2" strokeWidth="4" fill="none" opacity=".8" /></svg>
      <button aria-label="开始" className="ml-2 shrink-0">
        <svg viewBox="0 0 38 38" className="size-[38px]"><defs><radialGradient id="orb" cy=".85"><stop stopColor="#5fd0f5" /><stop offset=".6" stopColor="#2a73a8" /><stop offset="1" stopColor="#143d63" /></radialGradient></defs><circle cx="19" cy="19" r="17.500" fill="url(#orb)" stroke="#8fb6cc" /><path d="M3 16a16 16 0 0 1 32 0q-16 6-32 0z" fill="#fff" opacity=".3" /><path d="M11 11q4-3 8-1l-2 8q-4-2-8 .5z" fill="#ee5a2a" /><path d="M20.500 10.500q4 2.500 9 0l-2 8q-5 2-9-.5z" fill="#8cc63e" /><path d="M8.500 20q4-2 8 0l-2 7q-4-2-8 1z" fill="#45a8ea" /><path d="M18 20q4 2.500 9 .5l-2 7.500q-5 2-9-.5z" fill="#fdc82f" /></svg>
      </button>
      <button aria-label="资源管理器" className="ml-[13px] flex h-[38px] w-[51px] shrink-0 items-center justify-center rounded-[3px] border border-[#12405f] bg-[linear-gradient(90deg,#3fe03a_0%,#5fdc6e_12%,#a8dcc0_22%,#9fcbe4_100%)] shadow-[inset_0_0_0_1px_rgba(255,255,255,0.55)]"><FolderIcon /></button>
      <span className="ml-[2px] h-[38px] w-[5px] shrink-0 border-r border-l border-[#1e628f]" />
      <button aria-label="计算器" className="ml-[23px] shrink-0"><CalcIcon /></button>
      <button aria-label="有道" className="ml-[35px] flex size-8 shrink-0 items-center justify-center rounded-md bg-[#e01e1e] text-sm leading-4 font-bold whitespace-nowrap text-white">有道</button>
      <button aria-label="V" className="mr-[19px] ml-8 shrink-0"><VIcon /></button>
      <div className="flex gap-[3px]">
        <button aria-label="Chrome" className={`${taskButton} bg-[linear-gradient(135deg,#f2f8fc,#a9d3ec)]`}><ChromeIcon /></button>
        <button aria-label="便签" className={`${taskButton} bg-[linear-gradient(160deg,#8dc6e8,#4aa2d6)]`}><PenIcon /></button>
        <button aria-label="图片" className={`${taskButton} bg-[linear-gradient(160deg,#9ccbe8,#4a9dd3)]`}><PicIcon /></button>
        <button aria-label="微信" className={`${taskButton} bg-[linear-gradient(160deg,#93c4e6,#4295cf)]`}><WeChat className="h-[26px] w-8" /></button>
        <button aria-label="Word" className={`${taskButton} bg-[linear-gradient(160deg,#8fc0e4,#3c8dca)]`}><WordIcon /></button>
      </div>
      <div className="relative ml-auto flex h-full shrink-0 items-center">
        <svg viewBox="0 0 16 16" className="mb-[5px] size-4"><path d="m0 2 14-2 2 13-14 3z" fill="#f04a16" /><path d="M12 3.500Q4.500 3 4.500 5.500q.5 2 4 2.200 4 .3 3.500 2.800-.5 2.500-8 1.500" fill="none" stroke="#fff" strokeWidth="2" /></svg>
        <svg viewBox="0 0 16 16" className="mb-[5px] ml-[7px] size-4"><circle cx="8" cy="8" r="7.400" fill="#1b2cae" stroke="#cdd8ee" strokeWidth="1.200" /><path d="M5.500 6Q6 3.700 8.200 3.700t2.300 2.200Q10.300 7.300 8 8.300V10m0 1.200v1.500" fill="none" stroke="#fff" strokeWidth="1.700" /></svg>
        <svg viewBox="0 0 10 18" className="mb-[5px] ml-2 h-[18px] w-[10px]"><path d="M3 1.500h5.500v4H3zM.8 3.500h5v4h-5z" fill="#1b4b83" stroke="#fff" strokeWidth="1.200" /><path d="m2 14 2.500 3L7 14z" fill="#fff" /></svg>
        <svg viewBox="0 0 8 4" className="mt-[2px] ml-[11px] h-1 w-2"><path d="m0 4 4-4 4 4z" fill="#fff" /></svg>
        <svg viewBox="0 0 14 16" className="ml-[12px] h-4 w-[14px]"><path d="M3 .5h8V5H3z" fill="#4a6b84" stroke="#dfe8ee" /><path d="M5 2h1v1.500H5zM8 2h1v1.500H8z" fill="#fff" /><rect x=".5" y="5" width="13" height="10.500" rx="1" fill="#27a2dd" /><path d="M7 6.500V14M4.500 9v1.500L7 12l2.500-1.500V9" stroke="#fff" fill="none" /></svg>
        <svg viewBox="0 0 16 16" className="ml-[10px] size-4"><path d="M8 0q4 2 7.500 1.500Q16.500 11 8 16-.5 11 .5 1.500 4 2 8 0z" fill="#fff" /><path d="M8 1.500q3 1.500 6 1.200Q14.500 10 8 14.400 1.500 10 2 2.700q3 .3 6-1.200z" fill="#1e7be8" /><path d="m4 6.500 4 4 4-4" stroke="#fff" strokeWidth="2.200" fill="none" /></svg>
        <svg viewBox="0 0 16 16" className="ml-[9px] size-4"><path d="M1 1v14" stroke="#fff" strokeWidth="1.500" /><path d="M2.500 2q3-1 5 .5t5 0v6q-2.500 1-5 0t-5 0z" fill="#dfe7ef" /><circle cx="11" cy="11" r="4.600" fill="#d8301e" /><path d="m9 9 4 4m0-4-4 4" stroke="#fff" strokeWidth="1.500" /></svg>
        <WeChat className="ml-[7px] h-[13px] w-4" />
        <svg viewBox="0 0 16 14" className="ml-[9px] h-[14px] w-4"><path d="M1.500 14v-2.500M4.500 14v-4M7.500 14V8M10.500 14V5M13.500 14V1.500" stroke="#fff" strokeWidth="2" /></svg>
        <svg viewBox="0 0 14 16" className="ml-2 h-4 w-[14px]"><path d="M6 2H1.500v12.500H9" fill="none" stroke="#fff" strokeWidth="1.600" /><path d="M8 0v4M11.500 0v4" stroke="#fff" strokeWidth="1.500" /><path d="M5.500 4H14v2.500Q13.500 10 11 10.500V15H9v-4.500Q6 10 5.500 6.500z" fill="#fff" /></svg>
        <svg viewBox="0 0 14 14" className="ml-[10px] size-[14px]"><path d="M.5 4.500H3L7 1v12L3 9.500H.5z" fill="#fff" /><path d="M9 5q1.500 2 0 4m2-6q3 4 0 8" stroke="#fff" fill="none" /></svg>
        <div className="ml-4 w-[60px] text-center text-xs leading-[18px] whitespace-nowrap text-white"><div>13:05</div><div>2017/7/21</div></div>
        <button aria-label="显示桌面" className="ml-2 h-[38px] w-[14px] border border-[#0d2848] bg-[linear-gradient(#4c79a8,#153a68_50%,#2b5a8c)]" />
      </div>
    </div>
  );
}

function NetMeter() {
  return (
    <div className="absolute right-0 bottom-16 z-30 flex items-center" aria-label="40%">
      <div className="-mr-9 flex h-[42px] w-[95px] flex-col justify-center rounded-l-full bg-[#353844] pl-[10px] text-[11px] leading-[21px] text-white shadow-md">
        <div className="flex h-[21px] items-center gap-[6px] border-b border-[#292b35]"><svg viewBox="0 0 8 8" className="size-2"><path d="M4 8V1.500M1 4.500l3-3 3 3" fill="none" stroke="#55b9ee" strokeWidth="1.700" /></svg><span>1.9<span className="text-[10px] text-[#a1a4ac]">K/s</span></span></div>
        <div className="flex h-[21px] items-center gap-[6px]"><svg viewBox="0 0 8 8" className="size-2"><path d="M4 0v6.500M1 3.500l3 3 3-3" fill="none" stroke="#3db54a" strokeWidth="1.700" /></svg><span>1.1<span className="text-[10px] text-[#a1a4ac]">M/s</span></span></div>
      </div>
      <div className="relative mr-2 flex size-[60px] items-center justify-center rounded-full bg-[#565a6a] text-white shadow-lg">
        <svg viewBox="0 0 60 60" className="absolute inset-0"><defs><linearGradient id="arc" x2="0" y2="1"><stop stopColor="#3cd3df" /><stop offset="1" stopColor="#8fdc6c" /></linearGradient></defs><path d="M30 4.500A25.500 25.500 0 0 1 44 51.300" fill="none" stroke="url(#arc)" strokeWidth="2" /></svg>
        <span className="text-2xl leading-7 font-light">40</span><span className="mt-2 text-[10px] leading-3">%</span>
      </div>
    </div>
  );
}

export default function App() {
  return (
    <div className={`relative flex h-screen flex-col overflow-hidden ${UI_FONT}`}>
      <TabStrip />
      <Toolbar />
      <Bookmarks />
      <Page />
      <Shelf />
      <Taskbar />
      <button className="absolute top-7 right-[107px] z-30 flex h-6 w-[104px] items-center overflow-hidden rounded-sm border border-[#1b83c4] bg-[linear-gradient(#e2f3fe,#a9daf8)] text-xs leading-4 text-[#3d6e93]">
        <span className="flex h-full w-[29px] items-center justify-center bg-[#1e96e8]"><svg viewBox="0 0 22 18" className="h-[18px] w-[22px]" fill="none" stroke="#fff" strokeWidth="2.600"><circle cx="11" cy="5.500" r="4" /><circle cx="5.500" cy="12" r="4" /><path d="M11 10q3-3 6-1.500a4 4 0 1 1-3 7L9 9.500" /></svg></span>
        <span className="pl-[10px]">拖拽上传</span>
      </button>
      <NetMeter />
    </div>
  );
}
